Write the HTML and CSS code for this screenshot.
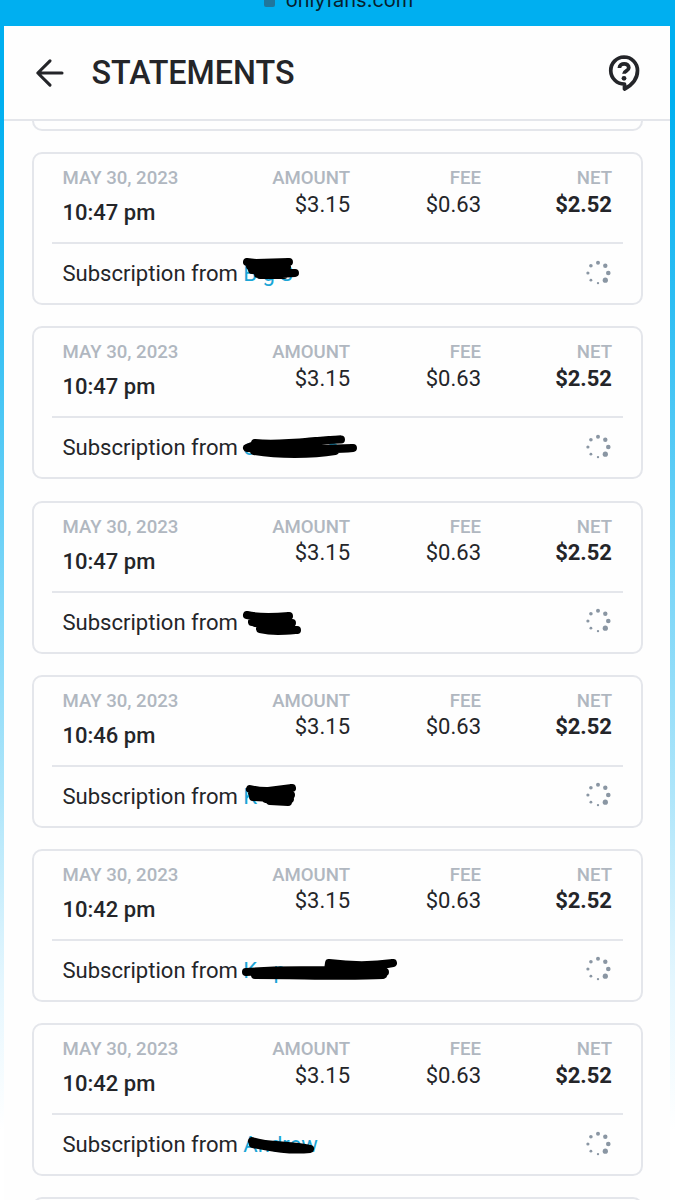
FILE: index.html
```html
<!DOCTYPE html>
<html lang="en">
<head>
  <meta charset="UTF-8">
  <meta name="viewport" content="width=device-width, initial-scale=1.0">
  <title>Statements</title>
  <link rel="stylesheet" href="styles.css">
</head>
<body>
  <div class="address-bar">
    <span class="lock"></span>
    <span class="domain">onlyfans.com</span>
  </div>

  <div class="page">
    <header class="header">
      <svg class="back" viewBox="0 0 30 30"><path d="M27 15H3M15 2.800L2.800 15l12.200 12.200"/></svg>
      <h1>STATEMENTS</h1>
      <svg class="help" viewBox="0 0 32 38">
        <path class="bubble" d="M16 3A13.500 13.500 0 0 1 29.500 16.500C29.500 24.500 24 31 16.500 35V30A13.500 13.500 0 1 1 16 3z"/>
        <path class="mark" d="M11.400 14c.3-5.600 9.400-5.400 9.400-.2 0 3.200-4.700 2.900-4.800 6"/>
        <circle cx="16" cy="24.300" r="2.400"/>
      </svg>
    </header>

    <main class="list">
      <div class="card card-cut"></div>
    </main>
  </div>

  <svg class="sprite">
    <symbol id="spinner" viewBox="0 0 26 26">
      <circle cx="13" cy="2.800" r="2"/>
      <circle cx="20.300" cy="5.700" r="2.200"/>
      <circle cx="23.300" cy="13" r="2.300"/>
      <circle cx="20.300" cy="20.200" r="2.600"/>
      <circle cx="13" cy="23.100" r="1.200"/>
      <circle cx="5.900" cy="20.200" r="1.400"/>
      <circle cx="2.900" cy="13" r="1.600"/>
      <circle cx="5.900" cy="5.700" r="1.800"/>
    </symbol>
  </svg>

  <template id="cardTemplate">
    <section class="card">
      <div class="summary">
        <div class="when">
          <div class="label">MAY 30, 2023</div>
          <div class="time"></div>
        </div>
        <div class="col amount"><div class="label">AMOUNT</div><div class="value">$3.15</div></div>
        <div class="col fee"><div class="label">FEE</div><div class="value">$0.63</div></div>
        <div class="col net"><div class="label">NET</div><div class="value">$2.52</div></div>
      </div>
      <div class="details">
        <span class="description">Subscription from <span class="user"><a class="name"></a><svg class="marker" viewBox="0 0 170 60"><path/></svg></span></span>
        <svg class="spinner"><use href="#spinner"/></svg>
      </div>
    </section>
  </template>

  <script>
    // marker paths are drawn over the user name
    const statements = [
      { time: '10:47 pm', name: 'B g\u2009S', marker: 'M17 16L26 17L59 16L20 20L57 21L22 24L56 25L28 28L65 27L30 29L54 29' },
      { time: '10:47 pm', name: 'o             s', marker: 'M25 23C54 26 85 20 111 19.500C88 20 62 24 22 26L17 28C52 30 88 29 123 28C88 31 54 29 24 31C48 35 82 35 105 31L33 29' },
      { time: '10:47 pm', name: '', marker: 'M17 20C30 23 46 22 59 21L22 27L62 28L25 28L60 31L30 34C43 37 54 36 67 35' },
      { time: '10:46 pm', name: 'K o', marker: 'M20 20C34 24 48 22 62 19L22 24L61 26L23 28L60 30L40 32L58 33L36 30' },
      { time: '10:42 pm', name: 'K   p', marker: 'M16 29L44 27.500L98 27L99 20C122 23 142 23 163 20C143 24 112 23 103 23L150 26L153 32C118 34 74 32 25 32L155 29' },
      { time: '10:42 pm', name: 'Andrew', marker: 'M22 24C39 30 60 27 80 32C60 34 43 31 23 27' }
    ];

    const list = document.querySelector('.list');
    const template = document.getElementById('cardTemplate');

    statements.forEach(item => {
      const card = template.content.cloneNode(true);
      card.querySelector('.time').textContent = item.time;
      card.querySelector('.name').textContent = item.name;
      card.querySelector('.marker path').setAttribute('d', item.marker);
      list.appendChild(card);
    });

    const next = document.createElement('div');
    next.className = 'card';
    list.appendChild(next);
  </script>
</body>
</html>
```

FILE: styles.css
```css
* {
  box-sizing: border-box;
}
body {
  margin: 0;
  height: 1200px;
  overflow: hidden;
  background: linear-gradient(#00aff0 0, #00aff0 100px, #2dbdf3 300px, #7fd7f8 600px, #ade5fa 790px, #e4f6fe 980px, #fff 1130px);
  font-family: Roboto, sans-serif;
  color: #242529;
}
.address-bar {
  display: flex;
  justify-content: center;
  height: 26px;
  padding-left: 2px;
  gap: 11px;
  background: #00aff0;
}
.lock {
  width: 11px;
  height: 7px;
  background: #20769c;
  border-radius: 0 0 2px 2px;
}
.domain {
  margin-top: -12px;
  font: 20px/24px Inter, sans-serif;
  color: #06202d;
}
.page {
  height: 1174px;
  margin: 0 5px 0 4px;
  overflow: hidden;
  background: #fefefe;
}
.header {
  display: flex;
  align-items: center;
  height: 95px;
  padding: 0 30px 0 31px;
  border-bottom: 2px solid #e4e6eb;
}
.back {
  width: 30px;
  height: 30px;
  fill: none;
  stroke: #242529;
  stroke-width: 3.1;
  stroke-linecap: round;
  stroke-linejoin: round;
}
h1 {
  margin: 0 auto 0 26.5px;
  font-size: 32.3px;
  font-weight: 500;
  line-height: 40px;
}
.help {
  width: 32px;
  height: 38px;
  fill: #242529;
}
.help .bubble {
  fill: none;
  stroke: #242529;
  stroke-width: 3.7;
  stroke-linejoin: round;
}
.help .mark {
  fill: none;
  stroke: #242529;
  stroke-width: 3.8;
}
.list {
  padding: 0 27px 0 28px;
}
.card {
  height: 153px;
  margin-bottom: 21.2px;
  padding: 0 18px;
  border: 2px solid #e4e6eb;
  border-radius: 10px;
}
.card-cut {
  height: 10px;
  border-top: none;
  border-radius: 0 0 10px 10px;
}
.summary {
  display: flex;
  height: 90px;
  padding: 13px 11px 0 10.5px;
  border-bottom: 2px solid #e4e6eb;
}
.when {
  flex: 1;
}
.label {
  font-size: 18.6px;
  font-weight: 500;
  line-height: 22px;
  color: #b0b7c0;
  white-space: nowrap;
}
.time {
  margin-top: 11px;
  font-size: 22px;
  font-weight: 500;
  line-height: 26px;
}
.col {
  width: 131px;
  text-align: right;
}
.value {
  margin-top: 2.4px;
  font-size: 22px;
  line-height: 26px;
}
.net .value {
  font-weight: 700;
}
.details {
  display: flex;
  align-items: center;
  justify-content: space-between;
  height: 60px;
  padding: 0 12px 0 10.5px;
}
.description {
  font-size: 22.05px;
  line-height: 26px;
  white-space: pre;
}
.user {
  position: relative;
}
.name {
  color: #1ba5d6;
}
.marker {
  position: absolute;
  left: -13px;
  top: -15px;
  width: 170px;
  height: 60px;
  fill: none;
  stroke: #000;
  stroke-width: 8;
  stroke-linecap: round;
  stroke-linejoin: round;
}
.spinner {
  width: 26px;
  height: 26px;
  margin-bottom: 3px;
  fill: #8a96a3;
}
.sprite {
  display: none;
}
```
